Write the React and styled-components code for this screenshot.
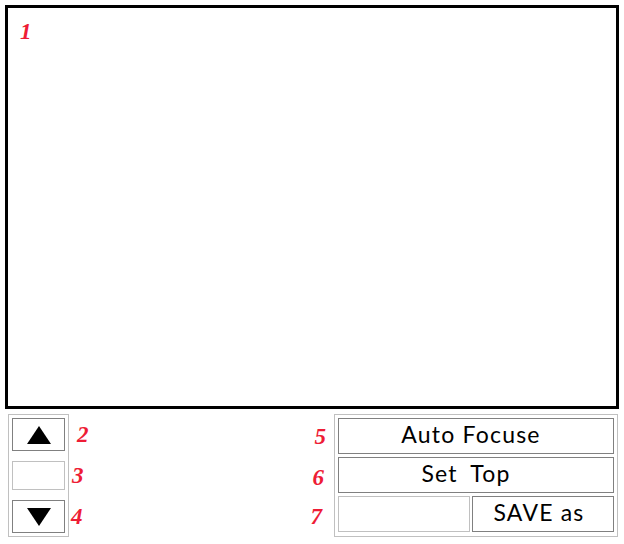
import React from 'react';
import styled, { createGlobalStyle } from 'styled-components';

const GlobalStyle = createGlobalStyle`
  html, body {
    margin: 0;
    padding: 0;
    background: #fff;
  }
  * {
    box-sizing: border-box;
  }
`;

const Page = styled.div`
  width: 624px;
  height: 544px;
  padding: 5px 5px 0;
  font-family: "Open Sans", "Liberation Sans", sans-serif;
`;

const Preview = styled.div`
  width: 614px;
  height: 404px;
  border: 3px solid #000;
  padding: 12px 0 0 12px;
`;

const Note = styled.div`
  height: ${(p) => p.$h || 40}px;
  margin-left: ${(p) => p.$left || 0}px;
  font-family: "Liberation Serif", serif;
  font-style: italic;
  font-weight: 700;
  font-size: 23px;
  line-height: ${(p) => p.$h || 40}px;
  color: #ee1c35;
`;

const Controls = styled.div`
  display: flex;
  justify-content: space-between;
  margin: 5px 1px 0 3px;
`;

const Group = styled.div`
  display: flex;
`;

const Notes = styled.div`
  display: flex;
  flex-direction: column;
  padding-top: ${(p) => p.$top}px;
  margin-right: ${(p) => p.$right || 0}px;
`;

const StepPanel = styled.div`
  width: 61px;
  height: 123px;
  border: 1px solid #c0c0c0;
  padding: 3px;
  display: flex;
  flex-direction: column;
  justify-content: space-between;
`;

const ActionPanel = styled.div`
  width: 284px;
  height: 123px;
  border: 1px solid #c0c0c0;
  padding: 3px 3px 4px 3px;
  display: flex;
  flex-direction: column;
  gap: 3px;
`;

const Button = styled.button`
  display: flex;
  align-items: center;
  justify-content: center;
  width: ${(p) => p.$w || '100%'};
  height: ${(p) => p.$h || 36}px;
  padding: 0 ${(p) => p.$shift || 0}px ${(p) => (p.$shift ? 4 : 0)}px 0;
  background: #fff;
  border: 1px solid #808080;
  font-family: "Lato", "Liberation Sans", sans-serif;
  font-size: 23px;
  letter-spacing: 1.2px;
  word-spacing: ${(p) => p.$words || 0}px;
  color: #000;
`;

const Field = styled.input`
  display: block;
  width: ${(p) => p.$w || '100%'};
  height: ${(p) => p.$h || 36}px;
  padding: 0;
  background: #fff;
  border: 1px solid #c0c0c0;
  outline: none;
`;

const SaveRow = styled.div`
  display: flex;
  gap: 2px;
`;

function Arrow({ down }) {
  return (
    <svg width="24" height="18" viewBox="0 0 24 18">
      <polygon points={down ? '0,0 24,0 12,18' : '12,0 24,18 0,18'} fill="#000" />
    </svg>
  );
}

export default function App() {
  return (
    <Page>
      <GlobalStyle />
      <Preview>
        <Note $h={24}>1</Note>
      </Preview>
      <Controls>
        <Group>
          <StepPanel>
            <Button $h={33}><Arrow /></Button>
            <Field $h={29} />
            <Button $h={33}><Arrow down /></Button>
          </StepPanel>
          <Notes $top={0}>
            <Note $left={8} $h={41}>2</Note>
            <Note $left={3} $h={41}>3</Note>
            <Note $left={2} $h={41}>4</Note>
          </Notes>
        </Group>
        <Group>
          <Notes $top={2} $right={8}>
            <Note $left={4} $h={41}>5</Note>
            <Note $left={2} $h={41}>6</Note>
            <Note $left={0} $h={37}>7</Note>
          </Notes>
          <ActionPanel>
            <Button $shift={10}>Auto Focuse</Button>
            <Button $shift={20} $words={6}>Set Top</Button>
            <SaveRow>
              <Field $w="132px" />
              <Button $w="142px" $shift={8}>SAVE as</Button>
            </SaveRow>
          </ActionPanel>
        </Group>
      </Controls>
    </Page>
  );
}
